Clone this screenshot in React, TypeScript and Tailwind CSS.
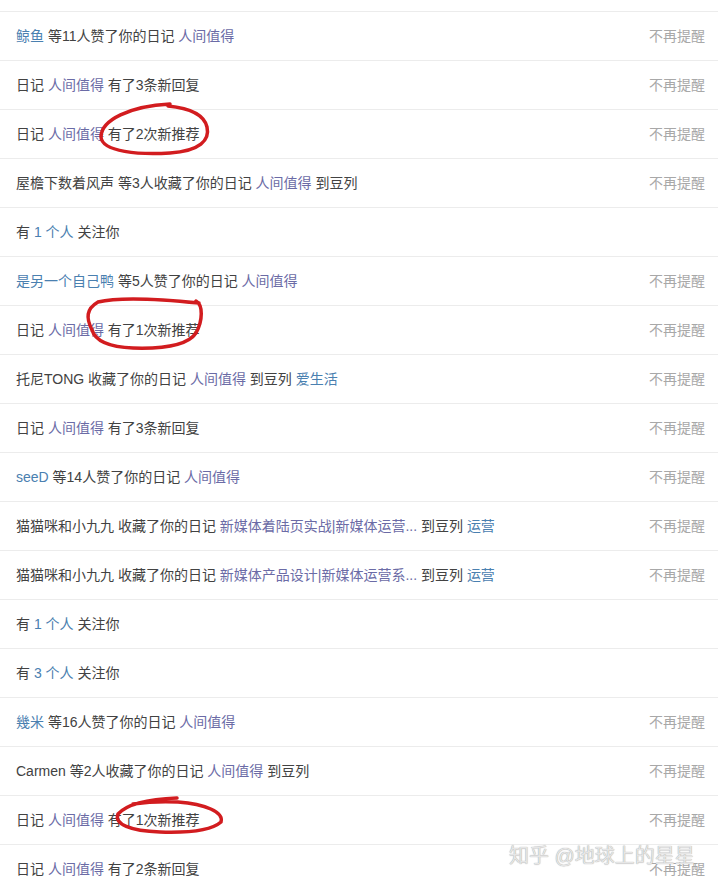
import React from 'react';

type Part = { t: string; c?: 'user' | 'title' | 'link' };

type Notice = {
  parts: Part[];
  mute?: boolean;
};

const u = (t: string): Part => ({ t, c: 'user' });
const d = (t: string): Part => ({ t, c: 'title' });
const l = (t: string): Part => ({ t, c: 'link' });
const p = (t: string): Part => ({ t });

const notices: Notice[] = [
  { parts: [u('鲸鱼'), p(' 等11人赞了你的日记 '), d('人间值得')], mute: true },
  { parts: [p('日记 '), d('人间值得'), p(' 有了3条新回复')], mute: true },
  { parts: [p('日记 '), d('人间值得'), p(' 有了2次新推荐')], mute: true },
  { parts: [p('屋檐下数着风声 等3人收藏了你的日记 '), d('人间值得'), p(' 到豆列')], mute: true },
  { parts: [p('有 '), l('1 个人'), p(' 关注你')] },
  { parts: [u('是另一个自己鸭'), p(' 等5人赞了你的日记 '), d('人间值得')], mute: true },
  { parts: [p('日记 '), d('人间值得'), p(' 有了1次新推荐')], mute: true },
  { parts: [p('托尼TONG 收藏了你的日记 '), d('人间值得'), p(' 到豆列 '), l('爱生活')], mute: true },
  { parts: [p('日记 '), d('人间值得'), p(' 有了3条新回复')], mute: true },
  { parts: [u('seeD'), p(' 等14人赞了你的日记 '), d('人间值得')], mute: true },
  { parts: [p('猫猫咪和小九九 收藏了你的日记 '), d('新媒体着陆页实战|新媒体运营...'), p(' 到豆列 '), l('运营')], mute: true },
  { parts: [p('猫猫咪和小九九 收藏了你的日记 '), d('新媒体产品设计|新媒体运营系...'), p(' 到豆列 '), l('运营')], mute: true },
  { parts: [p('有 '), l('1 个人'), p(' 关注你')] },
  { parts: [p('有 '), l('3 个人'), p(' 关注你')] },
  { parts: [u('幾米'), p(' 等16人赞了你的日记 '), d('人间值得')], mute: true },
  { parts: [p('Carmen 等2人收藏了你的日记 '), d('人间值得'), p(' 到豆列')], mute: true },
  { parts: [p('日记 '), d('人间值得'), p(' 有了1次新推荐')], mute: true },
  { parts: [p('日记 '), d('人间值得'), p(' 有了2条新回复')], mute: true },
];

const colorOf = (c?: Part['c']) => {
  if (c === 'user' || c === 'link') return 'text-[#4a80b0]';
  if (c === 'title') return 'text-[#6b6ba6]';
  return 'text-[#424242]';
};

// hand-drawn red marks over the screenshot
const Scribbles = () => (
  <svg className="pointer-events-none absolute left-0 top-0" width="720" height="887" fill="none" stroke="#d21c1f" strokeWidth="3.5" strokeLinecap="round">
    <path d="M170 104 C130 106 101 120 101 137 C102 152 140 155 170 153 C200 151 210 140 207 127 C204 114 188 108 168 106" />
    <path d="M196 301 C203 305 203 320 196 333 C188 345 165 349 133 348 C108 347 95 340 92 330 C86 318 86 309 98 302 C118 297 160 299 199 303" />
    <path d="M177 798 C150 799 128 803 118 814 C114 824 130 831 160 832 C190 833 212 830 221 822 C224 812 205 804 178 802 C160 801 140 803 133 804" />
  </svg>
);

export default function App() {
  return (
    <div className="relative h-[887px] w-[720px] overflow-hidden bg-white" style={{ fontFamily: '"Liberation Sans", "Noto Sans CJK SC", sans-serif' }}>
      <div className="pt-[11px] pr-[2px]">
        <ul className="border-t border-[#ececec]">
          {notices.map((n, i) => (
            <li key={i} className="flex h-[49px] items-center justify-between border-b border-[#ececec] pl-4 pr-[13px] text-[14px]">
              <span className="whitespace-pre">
                {n.parts.map((part, j) => (
                  <span key={j} className={colorOf(part.c)}>{part.t}</span>
                ))}
              </span>
              {n.mute && <span className="text-[#a8a8a8]">不再提醒</span>}
            </li>
          ))}
        </ul>
      </div>
      <Scribbles />
      <div className="pointer-events-none absolute left-[509px] top-[846px] whitespace-nowrap text-[20px] leading-none text-[#e6e6e6]" style={{ textShadow: '0 0 1px #8c8c8c' }}>
        知乎 @地球上的星星
      </div>
    </div>
  );
}
